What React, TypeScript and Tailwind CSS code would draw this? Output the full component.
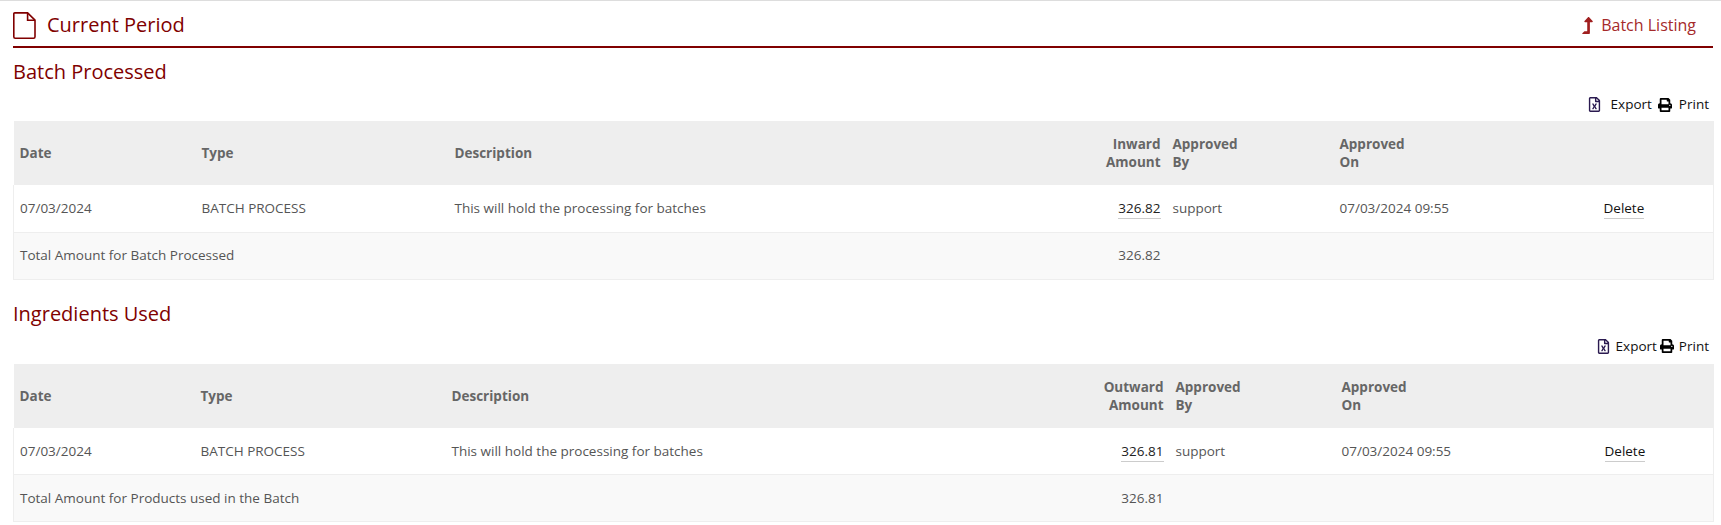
import React from 'react';
import { FaLevelUpAlt, FaPrint, FaRegFileExcel } from 'react-icons/fa';

type TableProps = {
  title: string;
  amountLabel: string;
  amount: string;
  totalLabel: string;
  cols: number[];
  toolGap: string;
  exportGap: string;
  printGap: string;
  toolsBottom: string;
};

const FileIcon = () => (
  <svg width="23" height="27" viewBox="0 0 23 27" fill="none" stroke="#800000" strokeWidth="1.6" className="shrink-0">
    <path d="M1.8 .9H14.6L22 8.2V24.8C22 25.6 21.4 26.2 20.6 26.2H2.2C1.4 26.2 .8 25.6 .8 24.8V1.9C.8 1.3 1.2 .9 1.8 .9Z" />
    <path d="M14.6 .9V8.2H22" />
  </svg>
);

const DataTable = ({ title, amountLabel, amount, totalLabel, cols, toolGap, exportGap, printGap, toolsBottom }: TableProps) => (
  <section>
    <h2 className="text-[20px] leading-[27px] text-[#800000] pl-[13px]">{title}</h2>
    <div className={`flex justify-end items-center ${toolGap} ml-[13px] mr-[12px] mt-[8px] ${toolsBottom} h-[23px] text-[13.5px] text-[#111]`}>
      <span className={`flex items-center ${exportGap}`}>
        <FaRegFileExcel size={15} className="text-[#2a1a50]" />
        Export
      </span>
      <span className={`flex items-center ${printGap}`}>
        <FaPrint size={14} className="text-black" />
        Print
      </span>
    </div>
    <div className="ml-[13px]">
      <table className="w-[1700px] table-fixed border-collapse text-[13.5px] text-[#555]">
        <colgroup>
          {cols.map((w, i) => (
            <col key={i} style={{ width: w }} />
          ))}
        </colgroup>
        <thead>
          <tr className="h-[64px] bg-[#eeeeee] font-bold text-left text-[#666] leading-[18px]">
            <th className="pl-[6px]">Date</th>
            <th className="pl-[6px]">Type</th>
            <th className="pl-[6px]">Description</th>
            <th className="text-right pr-[6px]">
              {amountLabel}
              <br />
              Amount
            </th>
            <th className="pl-[6px]">
              Approved
              <br />
              By
            </th>
            <th className="pl-[6px]">
              Approved
              <br />
              On
            </th>
            <th />
          </tr>
        </thead>
        <tbody>
          <tr className="h-[47px] bg-white border-b border-x border-[#eeeeee]">
            <td className="pl-[6px]">07/03/2024</td>
            <td className="pl-[6px]">BATCH PROCESS</td>
            <td className="pl-[6px]">This will hold the processing for batches</td>
            <td className="text-right pr-[6px]">
              <span className="text-[#222] border-b border-[#ccc] pb-[1px]">{amount}</span>
            </td>
            <td className="pl-[6px]">support</td>
            <td className="pl-[6px]">07/03/2024 09:55</td>
            <td className="pl-[6px]">
              <span className="text-[#111] border-b border-[#ccc] pb-[1px]">Delete</span>
            </td>
          </tr>
          <tr className="h-[47px] bg-[#f9f9f9] border-b border-x border-[#eeeeee]">
            <td className="pl-[6px] whitespace-nowrap" colSpan={3}>
              {totalLabel}
            </td>
            <td className="text-right pr-[6px]">{amount}</td>
            <td colSpan={3} />
          </tr>
        </tbody>
      </table>
    </div>
  </section>
);

export default function App() {
  return (
    <div className="w-[1721px] h-[525px] overflow-hidden bg-white border-t border-[#dddddd] font-['Open_Sans',sans-serif]">
      <header className="ml-[13px] mr-[8px] h-[47px] pt-[3px] flex items-center justify-between border-b-2 border-[#800000]">
        <div className="flex items-center gap-[11px] text-[20px] text-[#800000]">
          <FileIcon />
          Current Period
        </div>
        <a className="flex items-center gap-[5px] pr-[17px] text-[16px] text-[#a52a2a]">
          <FaLevelUpAlt size={17} className="text-[#a01f1f]" />
          Batch Listing
        </a>
      </header>
      <div className="pt-[10px]">
        <DataTable
          title="Batch Processed"
          amountLabel="Inward"
          amount="326.82"
          totalLabel="Total Amount for Batch Processed"
          cols={[182, 253, 599, 119, 167, 264, 116]}
          toolGap="gap-[6px]"
          exportGap="gap-[9px]"
          printGap="gap-[7px]"
          toolsBottom="mb-[5px]"
        />
        <div className="mt-[20px]">
          <DataTable
            title="Ingredients Used"
            amountLabel="Outward"
            amount="326.81"
            totalLabel="Total Amount for Products used in the Batch"
            cols={[181, 251, 605, 119, 166, 263, 115]}
            toolGap="gap-[3px]"
            exportGap="gap-[5px]"
            printGap="gap-[5px]"
            toolsBottom="mb-[6px]"
          />
        </div>
      </div>
    </div>
  );
}
